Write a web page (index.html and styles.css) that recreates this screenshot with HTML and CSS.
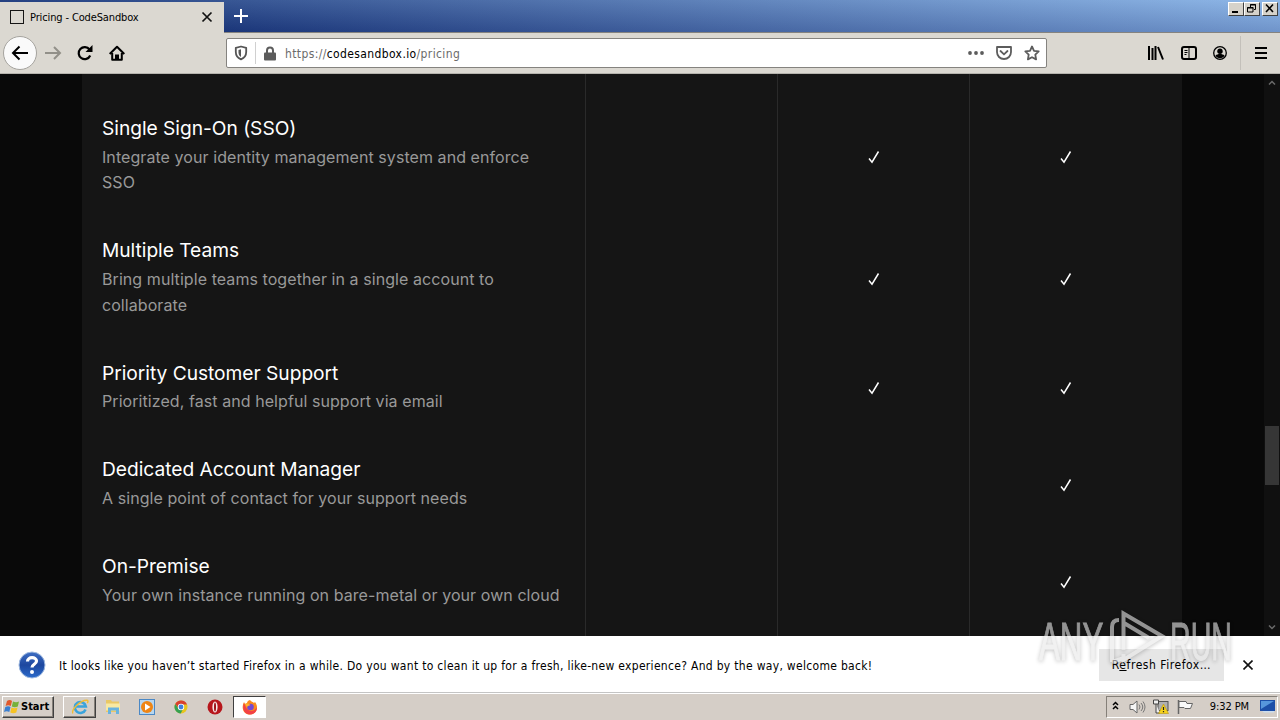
FILE: index.html
```html
<!DOCTYPE html>
<html lang="en">
<head>
    <meta charset="UTF-8">
    <meta name="viewport" content="width=device-width, initial-scale=1.0">
    <title>Pricing - CodeSandbox</title>
    <link rel="stylesheet" href="styles.css">
</head>
<body>
    <div class="titlebar">
        <div class="tab">
            <span class="favicon"></span>
            <span class="tab-title">Pricing - CodeSandbox</span>
            <svg class="tab-close" width="12" height="12" viewBox="0 0 12 12"><path d="M1.5 1.5l9 9M10.5 1.5l-9 9" stroke="#111" stroke-width="1.7"/></svg>
        </div>
        <svg class="new-tab" width="14" height="14" viewBox="0 0 14 14"><path d="M7 0v14M0 7h14" stroke="#fff" stroke-width="2"/></svg>
        <div class="window-buttons">
            <span class="win-btn"><svg width="13" height="11" viewBox="0 0 13 11"><path d="M3 8h6v2H3z"/></svg></span>
            <span class="win-btn"><svg width="13" height="11" viewBox="0 0 13 11"><path d="M5.500 4V1.500h5V6.500H9M5 2h6M2.500 4.500h5.500v4.500H2.500zM2 5h6.500" fill="none" stroke="#000"/></svg></span>
            <span class="win-btn last"><svg width="13" height="11" viewBox="0 0 13 11"><path d="M3 1.500l7 7.500M10 1.500L3 9" stroke="#000" stroke-width="1.6"/></svg></span>
        </div>
    </div>

    <div class="toolbar">
        <span class="back"><svg width="18" height="16" viewBox="0 0 18 16"><path d="M17 8H2M8.500 1.500L2 8l6.500 6.500" fill="none" stroke="#000" stroke-width="2"/></svg></span>
        <svg class="forward" width="17" height="14" viewBox="0 0 17 14"><path d="M0 7h15M9 1l6 6-6 6" fill="none" stroke="#929089" stroke-width="2"/></svg>
        <svg class="reload" width="16" height="16" viewBox="0 0 16 16"><path d="M13.200 10.500A6 6 0 1 1 12.500 4.500" fill="none" stroke="#000" stroke-width="2.200"/><path d="M15.500 0v7H8.500z"/></svg>
        <svg class="home" width="16" height="16" viewBox="0 0 16 16"><path d="M0.700 9L8 1.700 15.300 9M3.200 8v6.800h9.600V8" fill="none" stroke="#000" stroke-width="2" stroke-linejoin="round"/><path d="M6 15V9.500h4V15z"/></svg>
        <div class="urlbar">
            <svg class="shield" width="14" height="16" viewBox="0 0 14 16"><path d="M7 1.500L1.800 2.800v4.200c0 3.500 2 6 5.200 7.300 3.200-1.300 5.200-3.800 5.200-7.300V2.800z" fill="none" stroke="#555" stroke-width="1.800" stroke-linejoin="round"/><path d="M7 4.200L4.500 5v2.500C4.500 9.500 5.500 11 7 12z" fill="#555"/></svg>
            <span class="divider"></span>
            <svg class="lock" width="12" height="15" viewBox="0 0 12 15"><path d="M3 7V4.500a3 3 0 0 1 6 0V7" fill="none" stroke="#5c5c5c" stroke-width="2"/><rect y="6.500" width="12" height="8" rx="1" fill="#5c5c5c"/></svg>
            <span class="url">https://<b>codesandbox.io</b>/pricing</span>
            <svg class="dots" width="16" height="4" viewBox="0 0 16 4" fill="#5c5c5c"><circle cx="2" cy="2" r="1.900"/><circle cx="8" cy="2" r="1.900"/><circle cx="14" cy="2" r="1.900"/></svg>
            <svg class="pocket" width="16" height="14" viewBox="0 0 16 14"><path d="M1 1h14v5c0 4-3 7-7 7s-7-3-7-7z" fill="none" stroke="#5c5c5c" stroke-width="1.800" stroke-linejoin="round"/><path d="M4.500 5L8 8.300 11.500 5" fill="none" stroke="#5c5c5c" stroke-width="1.800" stroke-linecap="round"/></svg>
            <svg class="star" width="16" height="16" viewBox="0 0 16 16"><path d="M8 1.500l2 4.300 4.700.6-3.400 3.300.8 4.700L8 12.200l-4.100 2.200.8-4.700L1.300 6.400 6 5.800z" fill="none" stroke="#5c5c5c" stroke-width="1.800" stroke-linejoin="round"/></svg>
        </div>
        <div class="tools">
            <svg width="16" height="14" viewBox="0 0 16 14"><path d="M1 0v14M4.500 2v12M7.500 0v14M10 1l5 12.500" fill="none" stroke="#000" stroke-width="2"/></svg>
            <svg width="16" height="14" viewBox="0 0 16 14"><rect x="1" y="1" width="14" height="12" rx="2" fill="none" stroke="#000" stroke-width="2"/><path d="M8 1v12M3.500 4.500h3M3.500 6.500h3M3.500 8.500h2" stroke="#000" stroke-width="1"/></svg>
            <svg width="14" height="14" viewBox="0 0 14 14"><circle cx="7" cy="7" r="6.300" fill="none" stroke="#000" stroke-width="1.300"/><circle cx="7" cy="5.200" r="2.700"/><path d="M2.500 9.500c2-2 7-2 9 0C10 13 4 13 2.500 9.500z"/></svg>
            <span class="tools-divider"></span>
            <svg width="12" height="12" viewBox="0 0 12 12"><path d="M0 1h12M0 6h12M0 11h12" stroke="#000" stroke-width="2"/></svg>
        </div>
    </div>

    <div class="page">
        <div class="plans">
            <div class="row spacer"><div class="feature"></div><div class="cell"></div><div class="cell"></div><div class="cell"></div></div>
            <div class="row">
                <div class="feature"><h3>Single Sign-On (SSO)</h3><p>Integrate your identity management system and enforce SSO</p></div>
                <div class="cell"></div>
                <div class="cell"><svg class="check" viewBox="0 0 12 14"><path d="M1 8.500l3 3.700L10.500 1.500"/></svg></div>
                <div class="cell"><svg class="check" viewBox="0 0 12 14"><path d="M1 8.500l3 3.700L10.500 1.500"/></svg></div>
            </div>
            <div class="row">
                <div class="feature"><h3>Multiple Teams</h3><p>Bring multiple teams together in a single account to collaborate</p></div>
                <div class="cell"></div>
                <div class="cell"><svg class="check" viewBox="0 0 12 14"><path d="M1 8.500l3 3.700L10.500 1.500"/></svg></div>
                <div class="cell"><svg class="check" viewBox="0 0 12 14"><path d="M1 8.500l3 3.700L10.500 1.500"/></svg></div>
            </div>
            <div class="row">
                <div class="feature"><h3>Priority Customer Support</h3><p>Prioritized, fast and helpful support via email</p></div>
                <div class="cell"></div>
                <div class="cell"><svg class="check" viewBox="0 0 12 14"><path d="M1 8.500l3 3.700L10.500 1.500"/></svg></div>
                <div class="cell"><svg class="check" viewBox="0 0 12 14"><path d="M1 8.500l3 3.700L10.500 1.500"/></svg></div>
            </div>
            <div class="row">
                <div class="feature"><h3>Dedicated Account Manager</h3><p>A single point of contact for your support needs</p></div>
                <div class="cell"></div>
                <div class="cell"></div>
                <div class="cell"><svg class="check" viewBox="0 0 12 14"><path d="M1 8.500l3 3.700L10.500 1.500"/></svg></div>
            </div>
            <div class="row">
                <div class="feature"><h3>On-Premise</h3><p>Your own instance running on bare-metal or your own cloud</p></div>
                <div class="cell"></div>
                <div class="cell"></div>
                <div class="cell"><svg class="check" viewBox="0 0 12 14"><path d="M1 8.500l3 3.700L10.500 1.500"/></svg></div>
            </div>
            <div class="row spacer"><div class="feature"></div><div class="cell"></div><div class="cell"></div><div class="cell"></div></div>
        </div>
        <div class="scrollbar">
            <svg width="8" height="5" viewBox="0 0 8 5"><path d="M1 4.500l3-3 3 3" fill="none" stroke="#6a6a6a" stroke-width="1.500"/></svg>
            <span class="thumb"></span>
            <svg width="8" height="5" viewBox="0 0 8 5"><path d="M1 .5l3 3 3-3" fill="none" stroke="#6a6a6a" stroke-width="1.500"/></svg>
        </div>
    </div>

    <div class="notification">
        <svg class="question" width="28" height="28" viewBox="0 0 28 28">
            <defs><linearGradient id="q" x2="0" y2="1"><stop offset="0" stop-color="#3f6fc4"/><stop offset=".5" stop-color="#1d479f"/><stop offset="1" stop-color="#2b6bcb"/></linearGradient></defs>
            <circle cx="14" cy="14" r="13" fill="url(#q)" stroke="#9db8df"/>
            <path d="M9.500 10.500c0-5 9-5 9-.5 0 3.500-4.500 3-4.500 6.500" fill="none" stroke="#fff" stroke-width="3.200"/><circle cx="14" cy="21" r="2" fill="#fff"/>
        </svg>
        <span class="message">It looks like you haven’t started Firefox in a while. Do you want to clean it up for a fresh, like-new experience? And by the way, welcome back!</span>
        <span class="refresh">R<u>e</u>fresh Firefox…</span>
        <svg class="dismiss" width="10" height="10" viewBox="0 0 10 10"><path d="M.5.500l9 9M9.500.500l-9 9" stroke="#111" stroke-width="1.600"/></svg>
    </div>

    <div class="taskbar">
        <div class="start">
            <svg width="16" height="15" viewBox="0 0 16 15"><path d="M3 2c2-1.500 4-1 5 0L6.800 7C5 6 3.500 6 1.600 7z" fill="#e2592b"/><path d="M9 2.500c2 1 4 1 6 0L13.800 7.500c-2 1-4 1-6 0z" fill="#77b13c"/><path d="M1.300 8c2-1.200 4-1 5.200 0L5.300 13C3.500 12 2 12 0 13z" fill="#3b7fd0"/><path d="M7.500 8.500c2 1 4 1 6 0L12.300 13.500c-2 1-4 1-6 0z" fill="#f6c324"/></svg>
            <span>Start</span>
        </div>
        <div class="task raised">
            <svg width="18" height="16" viewBox="0 0 18 16"><path d="M14.500 10.500a5.500 5.500 0 1 1 .3-3H5" fill="none" stroke="#3aa4dc" stroke-width="2.600"/><path d="M2 14.500C-1 12 9 1 16 1.200c1.500.2 1 2 .3 3" fill="none" stroke="#f1bd32" stroke-width="1.400"/></svg>
        </div>
        <div class="task">
            <svg width="16" height="16" viewBox="0 0 16 16"><path d="M1 1h5l1 1.500h7V13H1z" fill="#e9c866"/><path d="M1 4.500h14v7H1z" fill="#f8e9a2"/><path d="M3 15V8.500h11V15h-3v-3.500H6V15z" fill="#68b3df"/></svg>
        </div>
        <div class="task">
            <svg width="16" height="16" viewBox="0 0 16 16"><rect x=".5" y=".5" width="15" height="15" fill="#b7d6ef" stroke="#4b88c5"/><circle cx="8" cy="8" r="6" fill="#ef8514"/><path d="M6 4.500L11.500 8 6 11.500z" fill="#fff"/></svg>
        </div>
        <div class="task">
            <svg width="14" height="14" viewBox="0 0 14 14"><circle cx="7" cy="7" r="6.500" fill="#e8c51d"/><path d="M1.200 4A6.500 6.500 0 0 1 13 4.500H7L4.500 8z" fill="#d8402f"/><path d="M1.200 4a6.500 6.500 0 0 0 5.500 9.500L9 9 4.500 8.500z" fill="#36a052"/><circle cx="7" cy="7" r="3.200" fill="#fff"/><circle cx="7" cy="7" r="2.400" fill="#4080dc"/></svg>
        </div>
        <div class="task">
            <svg width="16" height="16" viewBox="0 0 16 16"><circle cx="8" cy="8" r="7.500" fill="#b7161c"/><ellipse cx="8" cy="8" rx="2.600" ry="5.500" fill="#f7e9e9"/><ellipse cx="8" cy="8" rx="1" ry="4.500" fill="#9c1116"/></svg>
        </div>
        <div class="task pressed">
            <svg width="16" height="16" viewBox="0 0 16 16"><path d="M8 1c1 2 3 1.500 4 3l1-1c4 5 2 12-5 12.500C1 15.500-1 8 2 3l1 2 2-1c0-1 1-2.500 3-3z" fill="#fb8a1d"/><path d="M2 4c-2 5-.5 11 6 11.500 5 0 7-4 7-7-3 4-8 5-11 0z" fill="#f34145"/><circle cx="8.500" cy="8" r="3.300" fill="#7548d3"/><path d="M3 5c3-1 4 0 5.500 1-1 1-3 .5-3.500 2z" fill="#ffb02b"/></svg>
        </div>
        <div class="tray">
            <svg width="7" height="11" viewBox="0 0 7 11"><path d="M1 4l2.500-2.500L6 4M1 8l2.500-2.500L6 8" fill="none" stroke="#000" stroke-width="1.500"/></svg>
            <svg class="speaker" width="17" height="14" viewBox="0 0 17 14"><path d="M1 4.500h3L8 1v12L4 9.500H1z" fill="#f5f5f5" stroke="#666"/><path d="M10 4.500q2 2.500 0 5M12 3q3.500 4 0 8M14 1.500q4 5.500 0 11" fill="none" stroke="#777"/></svg>
            <svg class="network" width="16" height="15" viewBox="0 0 16 15"><rect x="5" y="2.500" width="10" height="9" fill="#b0b0b0" stroke="#555"/><path d="M.5 1h5v4h-5zM3 5v9h4" fill="#eee" stroke="#444"/><path d="M10.500 5l5 9.500h-10z" fill="#f6d21c" stroke="#b8960c" stroke-width=".6"/><path d="M10.500 8v3M10.500 12v1.200" stroke="#222" stroke-width="1.200"/></svg>
            <svg class="flag" width="17" height="14" viewBox="0 0 17 14"><path d="M1.500 0v14" stroke="#666" stroke-width="1.500"/><path d="M2 1.500h7l1 2h5.500l-2 5H8L7 7.500H2z" fill="#fafafa" stroke="#666"/></svg>
            <span class="clock">9:32 PM</span>
            <svg width="16" height="13" viewBox="0 0 16 13"><path d="M0 0h15v11H0z" fill="#1d4fa8"/><path d="M1 1h13L1 9z" fill="#5796dc"/><path d="M2 11h12v1.500H4z" fill="#cde"/></svg>
        </div>
    </div>

    <svg class="watermark" width="200" height="60" viewBox="0 0 200 60">
        <text transform="translate(4 52) scale(.59 1)">ANY</text>
        <path d="M77 54V19q0-7 7-7M88.500 42V5.500L127 28 88.500 52v-6M89 15l25 15M77 54l12-4"/>
        <text transform="translate(135 52) scale(.54 1)">RUN</text>
    </svg>
</body>
</html>
```
FILE: styles.css
```css
* {
    box-sizing: border-box;
}

body {
    margin: 0;
    width: 1280px;
    height: 720px;
    overflow: hidden;
    position: relative;
    display: flex;
    flex-direction: column;
    font-family: "DejaVu Sans Condensed", "DejaVu Sans", sans-serif;
    font-size: 12px;
    color: #000;
}

svg {
    display: block;
    flex: none;
}

/* title bar */
.titlebar {
    height: 33px;
    display: flex;
    align-items: flex-start;
    background: linear-gradient(to bottom, rgba(160, 200, 240, 0.18), rgba(0, 20, 90, 0.2)),
        linear-gradient(to right, #0a246a, #8bb4e6);
    border-bottom: 1px solid #85837f;
}

.tab {
    width: 224px;
    height: 31px;
    margin-top: 2px;
    padding: 0 11px 2px 10px;
    display: flex;
    align-items: center;
    background: #dbd8d1;
}

.favicon {
    width: 14px;
    height: 14px;
    border: 1.5px solid #151515;
}

.tab-title {
    flex: 1;
    margin: 1px 0 0 6px;
    font-size: 11px;
    letter-spacing: -0.13px;
    white-space: nowrap;
}

.new-tab {
    margin: 9px 0 0 10px;
}

.window-buttons {
    display: flex;
    margin: 2px 2px 0 auto;
}

.win-btn {
    width: 16px;
    height: 14px;
    background: #d6d2ca;
    border: 1px solid;
    border-color: #fff #404040 #404040 #fff;
}

.win-btn.last {
    margin-left: 2px;
}

/* navigation */
.toolbar {
    height: 41px;
    padding-left: 3px;
    display: flex;
    align-items: center;
    background: #dbd8d1;
    border-bottom: 1px solid #b5b3ad;
}

.back {
    width: 34px;
    height: 34px;
    display: flex;
    align-items: center;
    justify-content: center;
    background: #fafafa;
    border: 1px solid #a5a39e;
    border-radius: 50%;
}

.forward {
    margin-left: 8px;
}

.reload {
    margin-left: 15px;
}

.home {
    margin-left: 16px;
}

.urlbar {
    width: 821px;
    height: 30px;
    margin-left: 101px;
    display: flex;
    align-items: center;
    background: #fff;
    border: 1px solid #85837f;
    border-radius: 2px;
}

.shield {
    margin-left: 7px;
}

.divider {
    width: 1px;
    height: 22px;
    margin: 0 8px 0 7px;
    background: #d0d0d0;
}

.url {
    margin: 1px 0 0 9px;
    color: #6b6b6b;
    letter-spacing: 0.38px;
}

.url b {
    font-weight: normal;
    color: #000;
}

.dots {
    margin-left: auto;
}

.pocket {
    margin-left: 12px;
}

.star {
    margin: 0 6px 0 12px;
}

.tools {
    flex: 1;
    padding: 0 13px 0 101px;
    display: flex;
    align-items: center;
    justify-content: space-between;
}

.tools-divider {
    width: 1px;
    height: 34px;
    margin: 0 -2px 0 -4px;
    background: #c3c0ba;
}

/* page */
.page {
    height: 562px;
    padding-left: 82px;
    display: flex;
    justify-content: space-between;
    background: #090909;
}

.plans {
    width: 1100px;
    height: 562px;
    overflow: hidden;
    background: #151515;
    font-family: Inter, sans-serif;
}

.row {
    display: grid;
    grid-template-columns: 503px 192px 192px 213px;
}

.spacer {
    height: 22px;
}

.feature {
    padding: 18px 25px 22.4px 20px;
}

.spacer .feature {
    padding: 0;
}

.feature h3 {
    margin: 0 0 2.1px;
    font-size: 19.2px;
    line-height: 28.6px;
    font-weight: 400;
    letter-spacing: -0.03px;
    color: #fff;
}

.feature p {
    margin: 0;
    font-size: 16px;
    line-height: 25.6px;
    letter-spacing: 0.07px;
    color: #999;
}

.cell {
    display: flex;
    align-items: center;
    justify-content: center;
    padding-bottom: 1px;
    border-left: 1px solid #2a2a2a;
}

.cell:last-child {
    padding-right: 20px;
}

.check {
    width: 12px;
    height: 14px;
    fill: none;
    stroke: #fff;
    stroke-width: 1.5;
}

.scrollbar {
    width: 16px;
    padding: 6px 0;
    display: flex;
    flex-direction: column;
    align-items: center;
    justify-content: space-between;
    background: #101010;
}

.thumb {
    width: 14px;
    height: 59px;
    margin-top: 318px;
    margin-bottom: 118px;
    background: #363636;
}

/* notification bar */
.notification {
    height: 57px;
    padding-left: 18px;
    display: flex;
    align-items: center;
    background: #fff;
    border-bottom: 1px solid #c4c4c4;
}

.question {
    margin-top: 1px;
}

.message {
    margin: 3px 0 0 13px;
    letter-spacing: 0.305px;
    white-space: nowrap;
}

.refresh {
    width: 125px;
    height: 32px;
    margin-top: 2px;
    margin-left: auto;
    line-height: 32px;
    text-align: center;
    letter-spacing: 0.55px;
    background: #e6e6e6;
}

.dismiss {
    margin: 2px 27px 0 19px;
}

/* taskbar */
.taskbar {
    height: 27px;
    padding: 0 2px 1px;
    display: flex;
    align-items: center;
    background: #d5cec7;
    border-top: 1px solid #fff;
}

.start,
.raised {
    border: 1px solid;
    border-color: #fff #404040 #404040 #fff;
    box-shadow: inset -1px -1px #858079;
}

.start {
    width: 52px;
    height: 22px;
    margin-right: 9px;
    padding-left: 1px;
    display: flex;
    align-items: center;
    gap: 1px;
    font-weight: bold;
    font-size: 11px;
}

.task {
    width: 34px;
    height: 22px;
    display: flex;
    align-items: center;
    justify-content: center;
}

.raised,
.pressed {
    width: 33px;
}

.pressed {
    margin-left: 1px;
    background: #fff;
    border: 1px solid;
    border-color: #404040 #fff #fff #404040;
}

.tray {
    width: 172px;
    height: 22px;
    margin-left: auto;
    padding: 0 1px 0 5px;
    display: flex;
    align-items: center;
    border: 1px solid;
    border-color: #858079 #fff #fff #858079;
}

.speaker {
    margin-left: 10px;
}

.network {
    margin-left: 7px;
}

.flag {
    margin-left: 8px;
}

.clock {
    margin: 0 11px 0 auto;
    font-size: 11px;
    letter-spacing: -0.1px;
    white-space: nowrap;
}

/* overlay */
.watermark {
    position: absolute;
    left: 1035px;
    top: 608px;
    overflow: visible;
    opacity: 0.6;
    filter: drop-shadow(0 1px 2px rgba(0, 0, 0, 0.4));
    font-family: "Liberation Sans", sans-serif;
    font-size: 53px;
    fill: #e8e8e8;
    stroke: #e8e8e8;
}

.watermark path {
    fill: none;
    stroke-width: 4;
}
```
